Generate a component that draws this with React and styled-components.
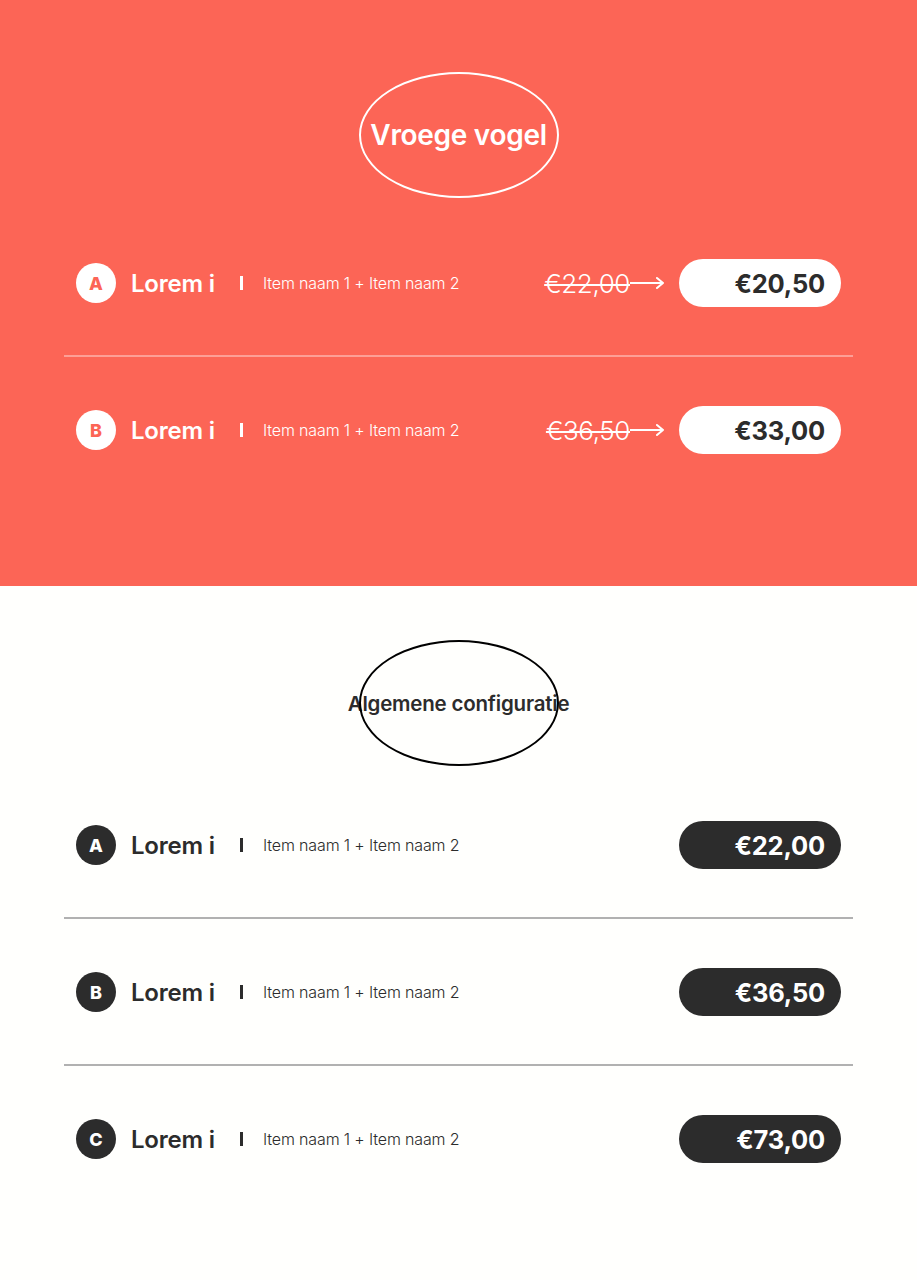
import React from 'react';
import styled, { createGlobalStyle } from 'styled-components';

const GlobalStyle = createGlobalStyle`
  body {
    margin: 0;
    background: #fffffd;
    font-family: Inter, "Noto Sans", sans-serif;
  }
`

const Section = styled.section`
  background: ${props => props.accent ? '#fc6556' : '#fffffd'};
  color: ${props => props.accent ? '#ffffff' : '#2c2c2c'};
  padding: ${props => props.accent ? '72px 64px 84px' : '54px 64px 70px'};
`

const TitleWrap = styled.div`
  display: flex;
  justify-content: center;
  margin-bottom: ${props => props.gap}px;
`

const Oval = styled.div`
  position: relative;
  width: 200px;
  height: 126px;
  display: flex;
  align-items: center;
  justify-content: center;
  &::before {
    content: '';
    position: absolute;
    inset: 0;
    border: 2px solid ${props => props.accent ? '#ffffff' : '#000000'};
    border-radius: 50%;
  }
`

const Title = styled.h2`
  margin: 0;
  white-space: nowrap;
  font-weight: 600;
  font-size: ${props => props.accent ? '28px' : '20.5px'};
  letter-spacing: ${props => props.accent ? '-0.3px' : '-0.2px'};
`

const List = styled.div`
  display: flex;
  flex-direction: column;
`

const Row = styled.div`
  display: flex;
  align-items: center;
  padding: 49px 12px 48px;
  border-top: ${props => props.first ? 'none' : `2px solid ${props.accent ? 'rgba(255,255,255,0.38)' : '#b1b1b1'}`};
`

const Badge = styled.div`
  width: 40px;
  height: 40px;
  border-radius: 50%;
  flex-shrink: 0;
  display: flex;
  align-items: center;
  justify-content: center;
  font-weight: 800;
  font-size: 18px;
  background: ${props => props.accent ? '#ffffff' : '#2c2c2c'};
  color: ${props => props.accent ? '#fc6556' : '#ffffff'};
`

const Name = styled.div`
  width: 110px;
  margin-left: 15px;
  font-size: 24px;
  font-weight: 600;
  letter-spacing: -0.2px;
  white-space: nowrap;
`

const Bar = styled.span`
  width: 3px;
  height: 14px;
  background: currentColor;
  margin-right: 20px;
  margin-left: -1px;
`

const Items = styled.div`
  flex: 1;
  font-size: 16px;
  font-weight: 300;
  letter-spacing: -0.15px;
  white-space: nowrap;
`

const OldPrice = styled.div`
  display: flex;
  align-items: center;
  margin-right: 14px;
`

const OldAmount = styled.span`
  font-size: 26px;
  font-weight: 300;
  letter-spacing: -0.4px;
  text-decoration: line-through;
  text-decoration-thickness: 2px;
`

const Pill = styled.div`
  width: 162px;
  height: 48px;
  box-sizing: border-box;
  border-radius: 24px;
  padding-right: 16px;
  display: flex;
  align-items: center;
  justify-content: flex-end;
  font-size: 25.5px;
  font-weight: 700;
  letter-spacing: -0.2px;
  background: ${props => props.accent ? '#ffffff' : '#2c2c2c'};
  color: ${props => props.accent ? '#2c2c2c' : '#ffffff'};
`

const Arrow = () => (
  <svg width="35" height="14" viewBox="0 0 35 14" fill="none" stroke="#fff" strokeWidth="2" strokeLinecap="round" strokeLinejoin="round">
    <path d="M0 7 H33 M27 2 L33 7 L27 12" />
  </svg>
)

const earlyBird = [
  { key: 'A', old: '€22,00', price: '€20,50' },
  { key: 'B', old: '€36,50', price: '€33,00' },
]

const general = [
  { key: 'A', price: '€22,00' },
  { key: 'B', price: '€36,50' },
  { key: 'C', price: '€73,00' },
]

const PriceRow = ({ item, accent, first }) => (
  <Row accent={accent} first={first}>
    <Badge accent={accent}>{item.key}</Badge>
    <Name>Lorem i</Name>
    <Bar />
    <Items>Item naam 1 + Item naam 2</Items>
    {item.old && (
      <OldPrice>
        <OldAmount>{item.old}</OldAmount>
        <Arrow />
      </OldPrice>
    )}
    <Pill accent={accent}>{item.price}</Pill>
  </Row>
)

const App = () => {
  return (
    <>
      <GlobalStyle />
      <Section accent>
        <TitleWrap gap={12}>
          <Oval accent>
            <Title accent>Vroege vogel</Title>
          </Oval>
        </TitleWrap>
        <List>
          {earlyBird.map((item, index) => (
            <PriceRow key={item.key} item={item} accent first={index === 0} />
          ))}
        </List>
      </Section>
      <Section>
        <TitleWrap gap={6}>
          <Oval>
            <Title>Algemene configuratie</Title>
          </Oval>
        </TitleWrap>
        <List>
          {general.map((item, index) => (
            <PriceRow key={item.key} item={item} first={index === 0} />
          ))}
        </List>
      </Section>
    </>
  )
}

export default App;
